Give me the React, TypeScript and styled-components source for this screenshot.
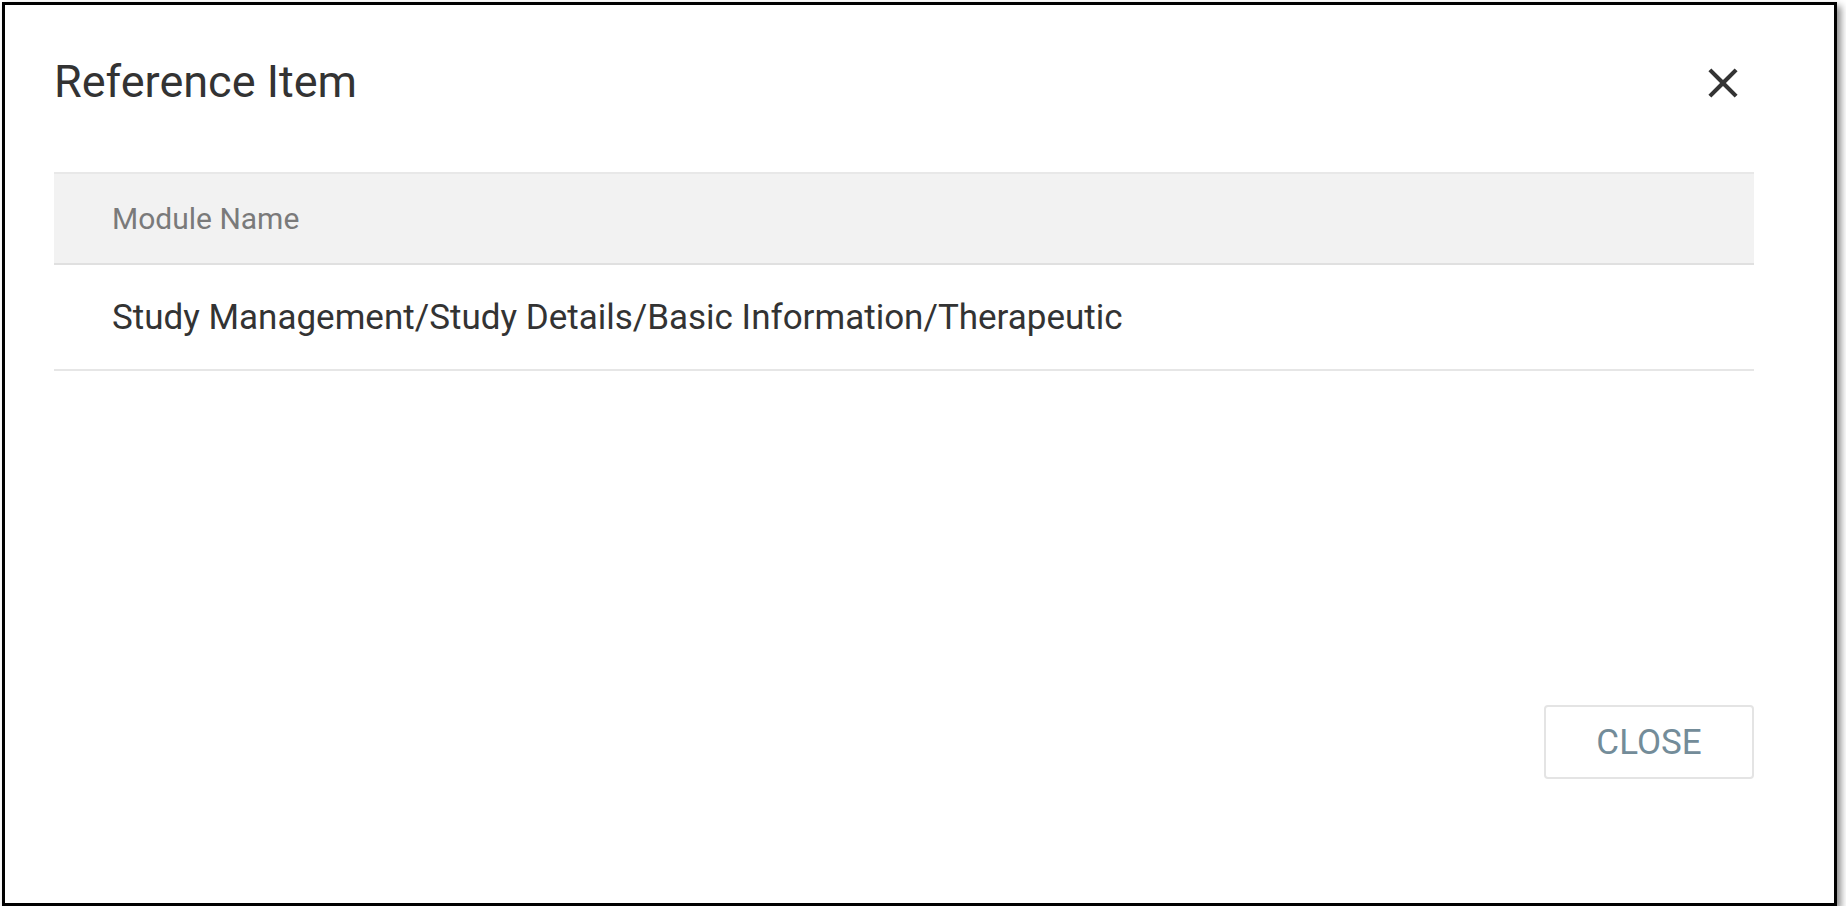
import React from "react";
import styled, { createGlobalStyle } from "styled-components";

const GlobalStyle = createGlobalStyle`
  html, body {
    margin: 0;
    padding: 0;
    background: #ffffff;
    font-family: Roboto, "Liberation Sans", Arial, sans-serif;
  }
`;

const Frame = styled.div`
  box-sizing: border-box;
  margin: 2px 0 0 2px;
  width: 1835px;
  height: 904px;
  border: 3px solid #000000;
  background: #ffffff;
  box-shadow: 4px 4px 7px rgba(0, 0, 0, 0.45);
  display: flex;
  flex-direction: column;
  padding: 50px 80px 124px 49px;
`;

const TitleBar = styled.div`
  display: flex;
  align-items: center;
  justify-content: space-between;
  height: 54px;
`;

const Title = styled.h2`
  margin: 0;
  font-size: 45px;
  line-height: 54px;
  font-weight: 400;
  color: #333333;
`;

const CloseIcon = styled.button`
  width: 50px;
  height: 50px;
  margin: 2px 6px 0 0;
  padding: 0;
  border: none;
  background: transparent;
  display: flex;
  align-items: center;
  justify-content: center;
  cursor: pointer;
  color: #333333;
`;

const Table = styled.div`
  margin-top: 63px;
  display: flex;
  flex-direction: column;
`;

const HeadRow = styled.div`
  box-sizing: border-box;
  height: 93px;
  display: flex;
  align-items: center;
  padding-left: 58px;
  background: #f2f2f2;
  border-top: 2px solid #e8e8e8;
  border-bottom: 2px solid #e0e0e0;
  font-size: 30px;
  color: #7a7a7a;
`;

const BodyRow = styled.div`
  box-sizing: border-box;
  height: 106px;
  display: flex;
  align-items: center;
  padding-left: 58px;
  border-bottom: 2px solid #e6e6e6;
  font-size: 35px;
  color: #333333;
`;

const Footer = styled.div`
  margin-top: auto;
  display: flex;
  justify-content: flex-end;
`;

const Button = styled.button`
  box-sizing: border-box;
  width: 210px;
  height: 74px;
  border: 2px solid #e4e4e4;
  border-radius: 4px;
  background: #ffffff;
  font-family: Roboto, "Liberation Sans", Arial, sans-serif;
  font-size: 35px;
  font-weight: 400;
  text-transform: uppercase;
  color: #738c99;
  cursor: pointer;
`;

const rows = ["Study Management/Study Details/Basic Information/Therapeutic"];

export default function App() {
  return (
    <>
      <GlobalStyle />
      <Frame>
        <TitleBar>
          <Title>Reference Item</Title>
          <CloseIcon aria-label="close">
            <svg width="50" height="50" viewBox="0 0 24 24" fill="currentColor">
              <path d="M19 6.41L17.59 5 12 10.59 6.41 5 5 6.41 10.59 12 5 17.59 6.41 19 12 13.41 17.59 19 19 17.59 13.41 12z" />
            </svg>
          </CloseIcon>
        </TitleBar>
        <Table>
          <HeadRow>Module Name</HeadRow>
          {rows.map((r) => (
            <BodyRow key={r}>{r}</BodyRow>
          ))}
        </Table>
        <Footer>
          <Button>Close</Button>
        </Footer>
      </Frame>
    </>
  );
}
